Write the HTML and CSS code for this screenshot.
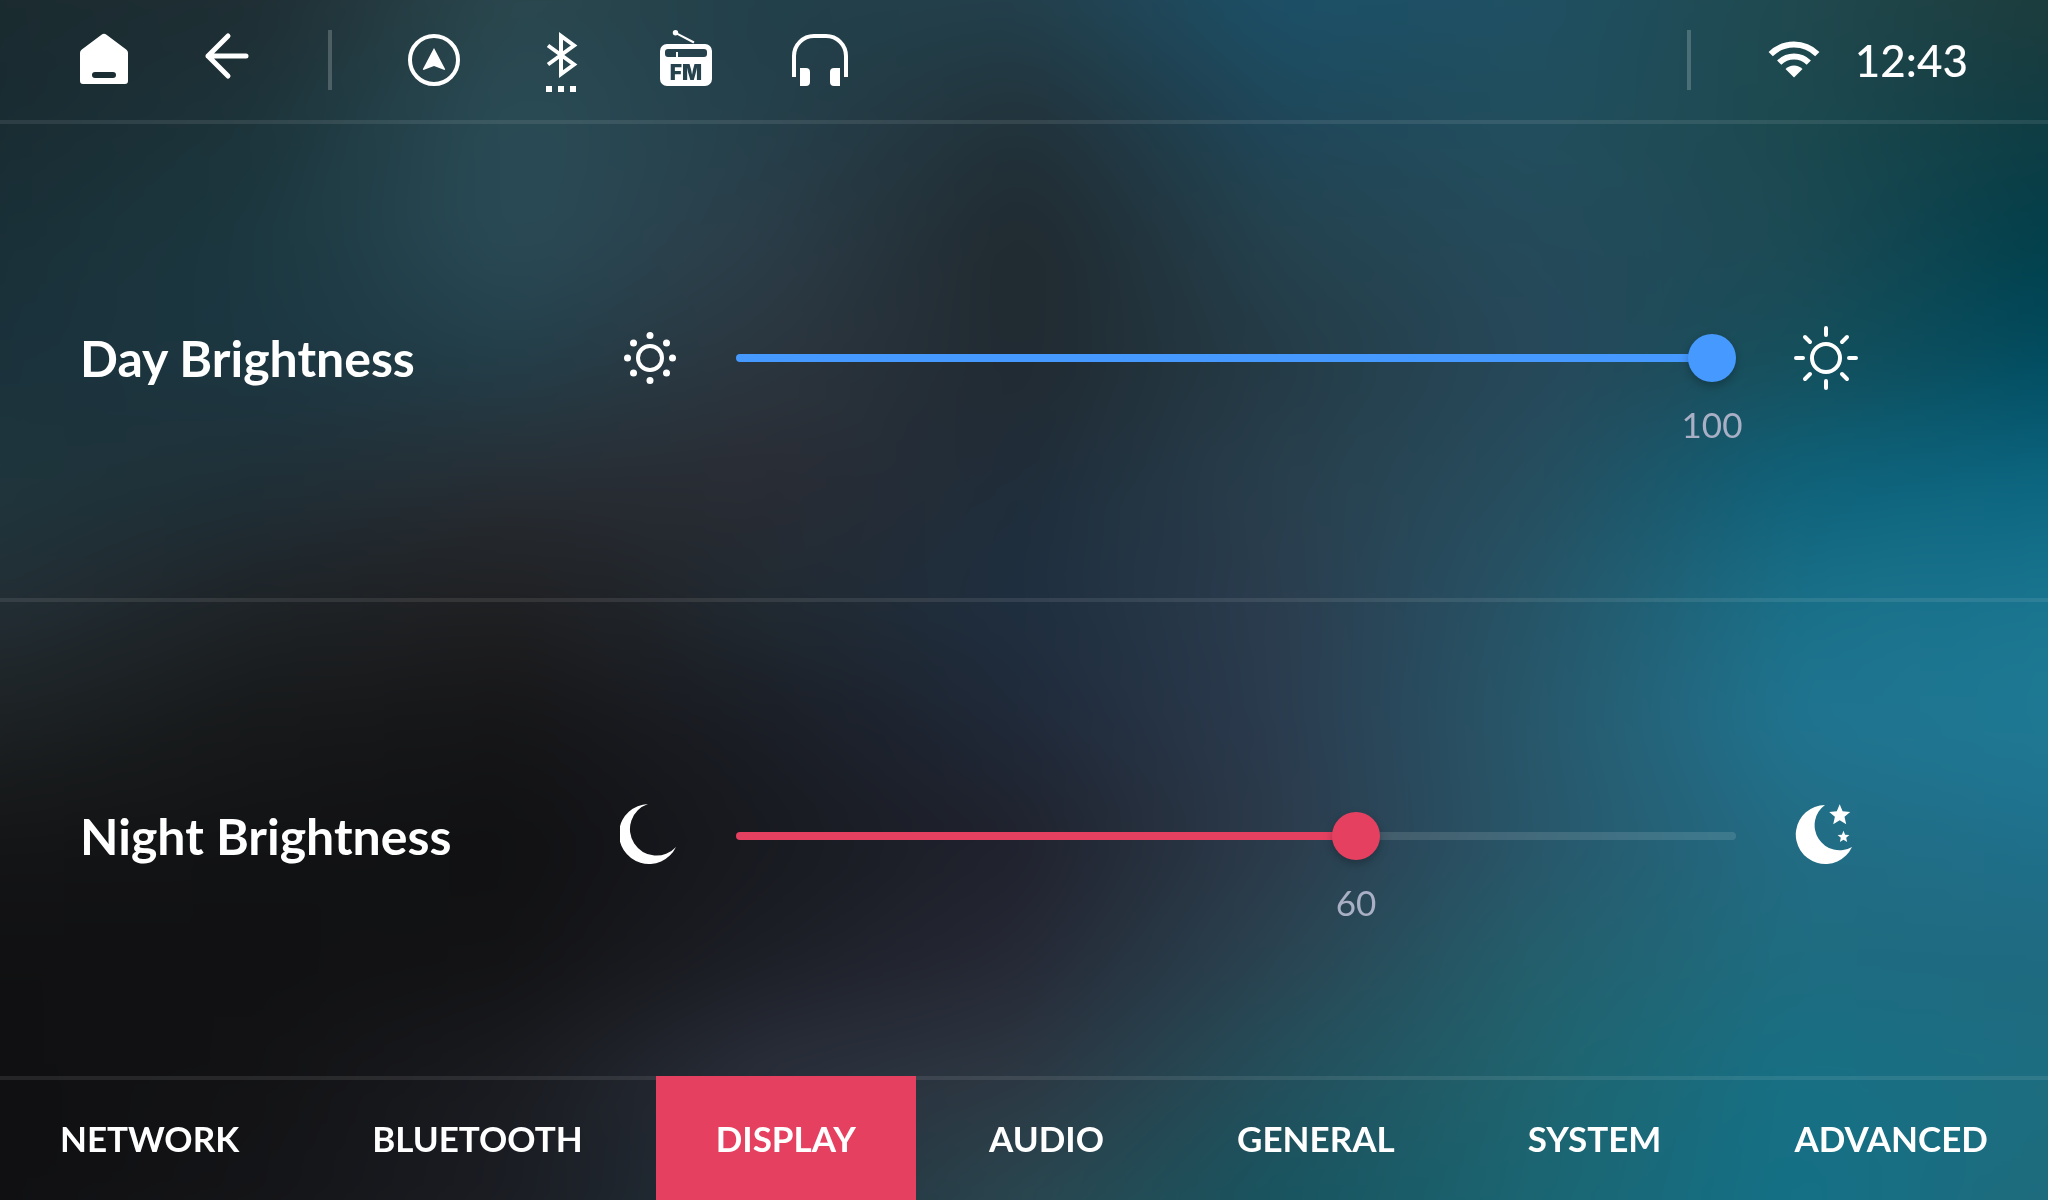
FILE: index.html
```html
<!DOCTYPE html>
<html lang="en">
<head>
<meta charset="utf-8">
<meta name="viewport" content="width=device-width, initial-scale=1">
<title>Display settings</title>
<link rel="stylesheet" href="styles.css">
</head>
<body>
<div class="backdrop" aria-hidden="true">
  <div class="band band-1"></div>
  <div class="band band-2"></div>
  <div class="band band-3"></div>
  <div class="band band-4"></div>
  <div class="band band-5"></div>
  <div class="band band-6"></div>
  <div class="band band-7"></div>
  <div class="band band-8"></div>
  <div class="band band-9"></div>
  <div class="band band-10"></div>
  <div class="band band-11"></div>
</div>

<div class="screen">
  <header class="topbar">
    <button class="icon-button" type="button" aria-label="Home">
      <svg width="48" height="64" viewBox="0 0 48 64"><path fill="currentColor" fill-rule="evenodd" d="M21.500 6.800a4 4 0 0 1 5 0L46.200 21.500A4 4 0 0 1 48 24.800V53a3 3 0 0 1-3 3H3a3 3 0 0 1-3-3V24.800a4 4 0 0 1 1.800-3.300ZM15 44a3 3 0 0 0 0 6h18a3 3 0 0 0 0-6Z"/></svg>
    </button>
    <button class="icon-button" type="button" aria-label="Back">
      <svg width="48" height="64" viewBox="0 0 48 64"><path class="line" stroke-width="5" stroke-linecap="round" stroke-linejoin="round" d="M42 28H4M24 8 4 28l20 20"/></svg>
    </button>
    <span class="separator"></span>
    <button class="icon-button" type="button" aria-label="Navigation">
      <svg width="52" height="64" viewBox="0 0 52 64"><circle class="line" cx="26" cy="32" r="24" stroke-width="4"/><path fill="currentColor" d="M26 20 37.200 41.200 36.500 42 26 38 15.500 42l-.7-.8Z"/></svg>
    </button>
    <button class="icon-button" type="button" aria-label="Bluetooth">
      <svg width="48" height="64" viewBox="0 0 48 64"><path class="line" stroke-width="4" d="M12 17.500 38 36.500 25 46V8l13 9.500L12 36.500"/><path fill="currentColor" d="M10 58h6v6h-6zM22 58h6v6h-6zM34 58h6v6h-6z"/></svg>
    </button>
    <button class="icon-button" type="button" aria-label="FM radio">
      <svg width="52" height="64" viewBox="0 0 52 64"><circle cx="15.500" cy="4.800" r="2.700" fill="currentColor"/><path class="line" stroke-width="2" d="M15.500 4.800 34 14.500"/><path fill="currentColor" fill-rule="evenodd" d="M7 16h38a7 7 0 0 1 7 7v28a7 7 0 0 1-7 7H7a7 7 0 0 1-7-7V23a7 7 0 0 1 7-7ZM8 21a3 3 0 0 0-3 3v2a3 3 0 0 0 3 3h8v-5h2v5h26a3 3 0 0 0 3-3v-2a3 3 0 0 0-3-3Z"/><text class="band-name" x="26" y="52" text-anchor="middle">FM</text></svg>
    </button>
    <button class="icon-button" type="button" aria-label="Headphones">
      <svg width="64" height="64" viewBox="0 0 64 64"><path class="line" stroke-width="4" d="M6 49V28A20 20 0 0 1 26 8h12a20 20 0 0 1 20 20v21"/><path fill="currentColor" d="M12 40h6a4 4 0 0 1 4 4v10a4 4 0 0 1-4 4h-6ZM52 40h-6a4 4 0 0 0-4 4v10a4 4 0 0 0 4 4h6Z"/></svg>
    </button>
    <div class="status">
      <span class="separator"></span>
      <div class="status-info">
        <svg width="54" height="64" viewBox="0 0 54 64" role="img" aria-label="Wi-Fi connected"><path class="line" stroke-width="6" d="M3.700 26.200a33 33 0 0 1 46.600 0M12.200 34.700a21 21 0 0 1 29.600 0"/><path fill="currentColor" d="M27 49.500 18.500 41a12 12 0 0 1 17 0Z"/></svg>
        <time class="clock" datetime="12:43">12:43</time>
      </div>
    </div>
  </header>

  <main class="settings">
    <section class="setting">
      <label class="setting-label" for="day">Day Brightness</label>
      <svg width="60" height="68" viewBox="0 0 60 68" aria-hidden="true">
        <circle class="line" cx="30" cy="34" r="12" stroke-width="4"/>
        <g fill="currentColor"><circle cx="30" cy="11.500" r="3.500"/><circle cx="30" cy="56.500" r="3.500"/><circle cx="7.500" cy="34" r="3.500"/><circle cx="52.500" cy="34" r="3.500"/><circle cx="13.500" cy="19" r="3.500"/><circle cx="46.500" cy="19" r="3.500"/><circle cx="13.500" cy="49" r="3.500"/><circle cx="46.500" cy="49" r="3.500"/></g>
      </svg>
      <div class="slider slider-day" style="--fill: 1">
        <input class="slider-input" id="day" type="range" min="0" max="100" value="100">
        <output class="slider-value" for="day">100</output>
      </div>
      <svg width="68" height="68" viewBox="0 0 68 68" aria-hidden="true">
        <circle class="line" cx="34" cy="34" r="14" stroke-width="4"/>
        <path class="line" stroke-width="4" stroke-linecap="round" d="M34 4v7M34 57v7M4 34h7M57 34h7M13 13l5 5M50 50l5 5M13 55l5-5M50 18l5-5"/>
      </svg>
    </section>
    <div class="divider"></div>
    <section class="setting">
      <label class="setting-label" for="night">Night Brightness</label>
      <svg width="60" height="68" viewBox="0 0 60 68" aria-hidden="true">
        <path fill="currentColor" d="M28 2A30 30 0 1 0 56 45 26.500 26.500 0 1 1 28 2Z"/>
      </svg>
      <div class="slider slider-night" style="--fill: 0.626">
        <input class="slider-input" id="night" type="range" min="-7" max="100" value="60">
        <output class="slider-value" for="night">60</output>
      </div>
      <svg width="68" height="68" viewBox="0 0 68 68" aria-hidden="true">
        <defs><path id="star" d="M0-11 2.900-4 10.500-3.400 4.800 1.500 6.500 8.900 0 5-6.500 8.900-4.800 1.500-10.500-3.400-2.900-4Z"/></defs>
        <path fill="currentColor" d="M33 3A29.500 29.500 0 1 0 60 45 25 25 0 0 1 33 3Z"/>
        <use href="#star" fill="currentColor" transform="translate(47.700 13.300)"/>
        <use href="#star" fill="currentColor" transform="translate(51.500 35) scale(.56)"/>
      </svg>
    </section>
  </main>

  <nav class="tabs" aria-label="Settings">
    <a class="tab" href="#network">NETWORK</a>
    <a class="tab" href="#bluetooth">BLUETOOTH</a>
    <a class="tab tab-active" href="#display" aria-current="page">DISPLAY</a>
    <a class="tab" href="#audio">AUDIO</a>
    <a class="tab" href="#general">GENERAL</a>
    <a class="tab" href="#system">SYSTEM</a>
    <a class="tab" href="#advanced">ADVANCED</a>
  </nav>
</div>
</body>
</html>
```
FILE: styles.css
```css
:root {
  --accent: #e64061;
  --blue: #4699ff;
  --rule: rgba(255, 255, 255, 0.09);
  --muted: #a9afc4;
}

*,
*::before,
*::after {
  box-sizing: border-box;
}

body {
  margin: 0;
  background: #101012;
  color: #fff;
  font-family: Lato, "Liberation Sans", sans-serif;
}

svg {
  display: block;
}

.line {
  fill: none;
  stroke: currentColor;
}

/* Backdrop: stacked colour bands, each fading into the one above it.
   It bleeds past the window so the blur never shows an edge. */
.backdrop {
  --bleed: 80px;
  position: fixed;
  inset: calc(var(--bleed) * -1);
  z-index: -1;
  display: grid;
  grid-template-columns: 1fr;
  grid-template-rows: var(--bleed) repeat(10, 1fr) var(--bleed);
  filter: blur(32px);
}

.band {
  --end: calc(100% - var(--bleed));
  grid-column: 1;
  -webkit-mask-image: linear-gradient(transparent, #000 10vh);
  mask-image: linear-gradient(transparent, #000 10vh);
}

.band-1 {
  grid-row: 1 / -1;
  -webkit-mask-image: none;
  mask-image: none;
  background: linear-gradient(90deg, #1b2b30 var(--bleed), #1f2e33, #2b474e, #22404a, #23404c, #1c5068, #1f5063, #20494f, #1e3c3c var(--end));
}

.band-2 {
  grid-row: 2 / -1;
  background: linear-gradient(90deg, #192c32 var(--bleed), #1d343b, #2a4c56, #25404b, #22323a, #1f475a, #224f5e, #1c494f, #103c43 var(--end));
}

.band-3 {
  grid-row: 3 / -1;
  background: linear-gradient(90deg, #1a3038 var(--bleed), #1c3840, #2a4b57, #2b3d48, #20292f, #25424e, #254b5b, #1d4a54, #013f4a var(--end));
}

.band-4 {
  grid-row: 4 / -1;
  background: linear-gradient(90deg, #1b323c var(--bleed), #1c3742, #233f4a, #2c363f, #212a31, #243b46, #28485a, #164f5b, #014c60 var(--end));
}

.band-5 {
  grid-row: 5 / -1;
  background: linear-gradient(90deg, #1f363d var(--bleed), #203038, #282e35, #2a2c34, #1f2d3a, #293f4d, #264e5e, #0e627a, #0c6680 var(--end));
}

.band-6 {
  grid-row: 6 / -1;
  background: linear-gradient(90deg, #232f36 var(--bleed), #1f2428, #202022, #212b33, #1f2f40, #2b3d4e, #265568, #1a7088, #1a7590 var(--end));
}

.band-7 {
  grid-row: 7 / -1;
  background: linear-gradient(90deg, #1d2224 var(--bleed), #17191a, #161618, #1b1e26, #202a3a, #2b3c4f, #28586b, #207490, #1f7a94 var(--end));
}

.band-8 {
  grid-row: 8 / -1;
  background: linear-gradient(90deg, #141516 var(--bleed), #121314, #111113, #181a20, #20222d, #2c3b4b, #29566a, #226c84, #20708c var(--end));
}

.band-9 {
  grid-row: 9 / -1;
  background: linear-gradient(90deg, #111113 var(--bleed), #111113, #131315, #1d1f27, #262936, #2b4452, #245f6c, #1f6c80, #1f6a80 var(--end));
}

.band-10 {
  grid-row: 10 / -1;
  background: linear-gradient(90deg, #101012 var(--bleed), #131315, #1a1c21, #2b303c, #2d3843, #23505c, #1f646f, #177084, #1d6e80 var(--end));
}

.band-11 {
  grid-row: 11 / -1;
  background: linear-gradient(90deg, #101013 var(--bleed), #141518, #1b1d24, #22313b, #2a4750, #175560, #1b6572, #147086, #1e6b7c var(--end));
}

.screen {
  display: flex;
  flex-direction: column;
  min-height: 100vh;
}

/* Top bar */
.topbar {
  display: flex;
  align-items: center;
  gap: 76px;
  padding: 28px 80px;
  border-bottom: 4px solid var(--rule);
}

.icon-button {
  padding: 0;
  border: 0;
  background: none;
  color: inherit;
  cursor: pointer;
}

.separator {
  width: 4px;
  height: 60px;
  background: rgba(255, 255, 255, 0.2);
}

.band-name {
  fill: #25424d;
  font-family: Inter, "Liberation Sans", sans-serif;
  font-size: 21px;
  font-weight: 900;
}

.status {
  display: flex;
  align-items: center;
  gap: 76px;
  margin-left: auto;
}

.status-info {
  display: flex;
  align-items: center;
  gap: 34px;
}

.clock {
  font-size: 44px;
  font-weight: 500;
  line-height: 64px;
}

/* Settings */
.settings {
  flex: 1;
  display: grid;
  grid-template-rows: 1fr auto 1fr;
}

.divider {
  height: 4px;
  background: var(--rule);
}

.setting {
  display: grid;
  grid-template-columns: 484px 60px 1fr 68px;
  align-items: center;
  column-gap: 56px;
  padding: 0 188px 6px 80px;
}

.setting-label {
  font-size: 50px;
  font-weight: 700;
  line-height: 60px;
}

.slider {
  position: relative;
  display: flex;
  align-items: center;
}

.slider-day {
  --color: var(--blue);
}

.slider-night {
  --color: var(--accent);
}

.slider-input {
  --stop: calc(24px + (100% - 48px) * var(--fill));
  -webkit-appearance: none;
  appearance: none;
  width: 100%;
  height: 8px;
  margin: 0;
  border-radius: 4px;
  background: linear-gradient(90deg, var(--color) var(--stop), rgba(255, 255, 255, 0.12) var(--stop));
}

.slider-input::-webkit-slider-thumb {
  -webkit-appearance: none;
  width: 48px;
  height: 48px;
  border-radius: 50%;
  background: var(--color);
  box-shadow: 0 4px 8px rgba(0, 0, 0, 0.25);
}

.slider-input::-moz-range-thumb {
  width: 48px;
  height: 48px;
  border: 0;
  border-radius: 50%;
  background: var(--color);
  box-shadow: 0 4px 8px rgba(0, 0, 0, 0.25);
}

.slider-value {
  position: absolute;
  top: 48px;
  left: calc(24px + (100% - 48px) * var(--fill));
  transform: translateX(-50%);
  color: var(--muted);
  font-size: 35px;
  line-height: 44px;
}

/* Bottom tabs */
.tabs {
  display: flex;
  justify-content: space-between;
  box-shadow: inset 0 4px 0 var(--rule);
}

.tab {
  padding: 40px 60px;
  color: inherit;
  font-size: 35px;
  font-weight: 700;
  line-height: 44px;
  text-decoration: none;
}

.tab-active {
  background: var(--accent);
}
```
